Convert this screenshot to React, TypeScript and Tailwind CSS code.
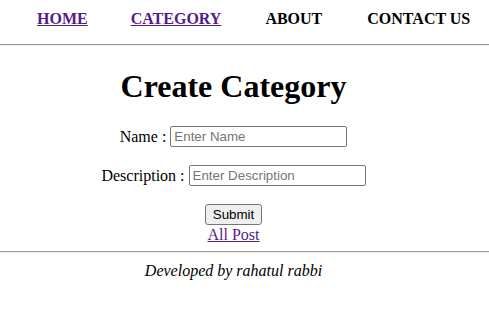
export default function App() {
    return (
        <div className="min-h-[317px] bg-white font-['Liberation_Serif',serif] text-[16px] leading-[18px] text-black">
            {/* Navigation */}
            <nav className="flex pl-[37px] pt-[10px] font-bold">
                <a href="#" className="text-[#551a8b] underline">
                    HOME
                </a>
                <a href="#" className="ml-[43px] text-[#551a8b] underline">
                    CATEGORY
                </a>
                <a href="#" className="ml-[44px]">
                    ABOUT
                </a>
                <a href="#" className="ml-[45px]">
                    CONTACT US
                </a>
            </nav>
            <div className="mt-[16px] h-[2px] border-t border-b border-t-[#9a9a9a] border-b-[#eeeeee]" />

            {/* Form */}
            <div className="flex flex-col items-center pr-[22px]">
                <h1 className="mt-[22px] text-[32px] font-bold leading-[37px]">
                    Create Category
                </h1>
                <form className="flex flex-col items-center">
                    <div className="mt-[21px] flex items-center gap-[4px]">
                        <label htmlFor="name">Name :</label>
                        <input
                            id="name"
                            type="text"
                            placeholder="Enter Name"
                            className="h-[21px] w-[177px] rounded-[2px] border border-[#767676] px-[3px] font-['Liberation_Sans',Arial,sans-serif] text-[13.33px] placeholder:text-[#757575]"
                        />
                    </div>
                    <div className="mt-[18px] flex items-center gap-[4px]">
                        <label htmlFor="description">Description :</label>
                        <input
                            id="description"
                            type="text"
                            placeholder="Enter Description"
                            className="h-[21px] w-[177px] rounded-[2px] border border-[#767676] px-[3px] font-['Liberation_Sans',Arial,sans-serif] text-[13.33px] placeholder:text-[#757575]"
                        />
                    </div>
                    <button
                        type="submit"
                        className="mt-[18px] h-[21px] rounded-[3px] border border-[#767676] bg-[#efefef] px-[7px] font-['Liberation_Sans',Arial,sans-serif] text-[13.33px] leading-[16px]"
                    >
                        Submit
                    </button>
                </form>
                <a href="#" className="mt-[1px] text-[#551a8b] underline">
                    All Post
                </a>
            </div>
            <div className="mt-[7px] h-[2px] border-t border-b border-t-[#9a9a9a] border-b-[#eeeeee]" />

            {/* Footer */}
            <p className="mt-[9px] pr-[22px] text-center italic">
                Developed by rahatul rabbi
            </p>
        </div>
    );
}
